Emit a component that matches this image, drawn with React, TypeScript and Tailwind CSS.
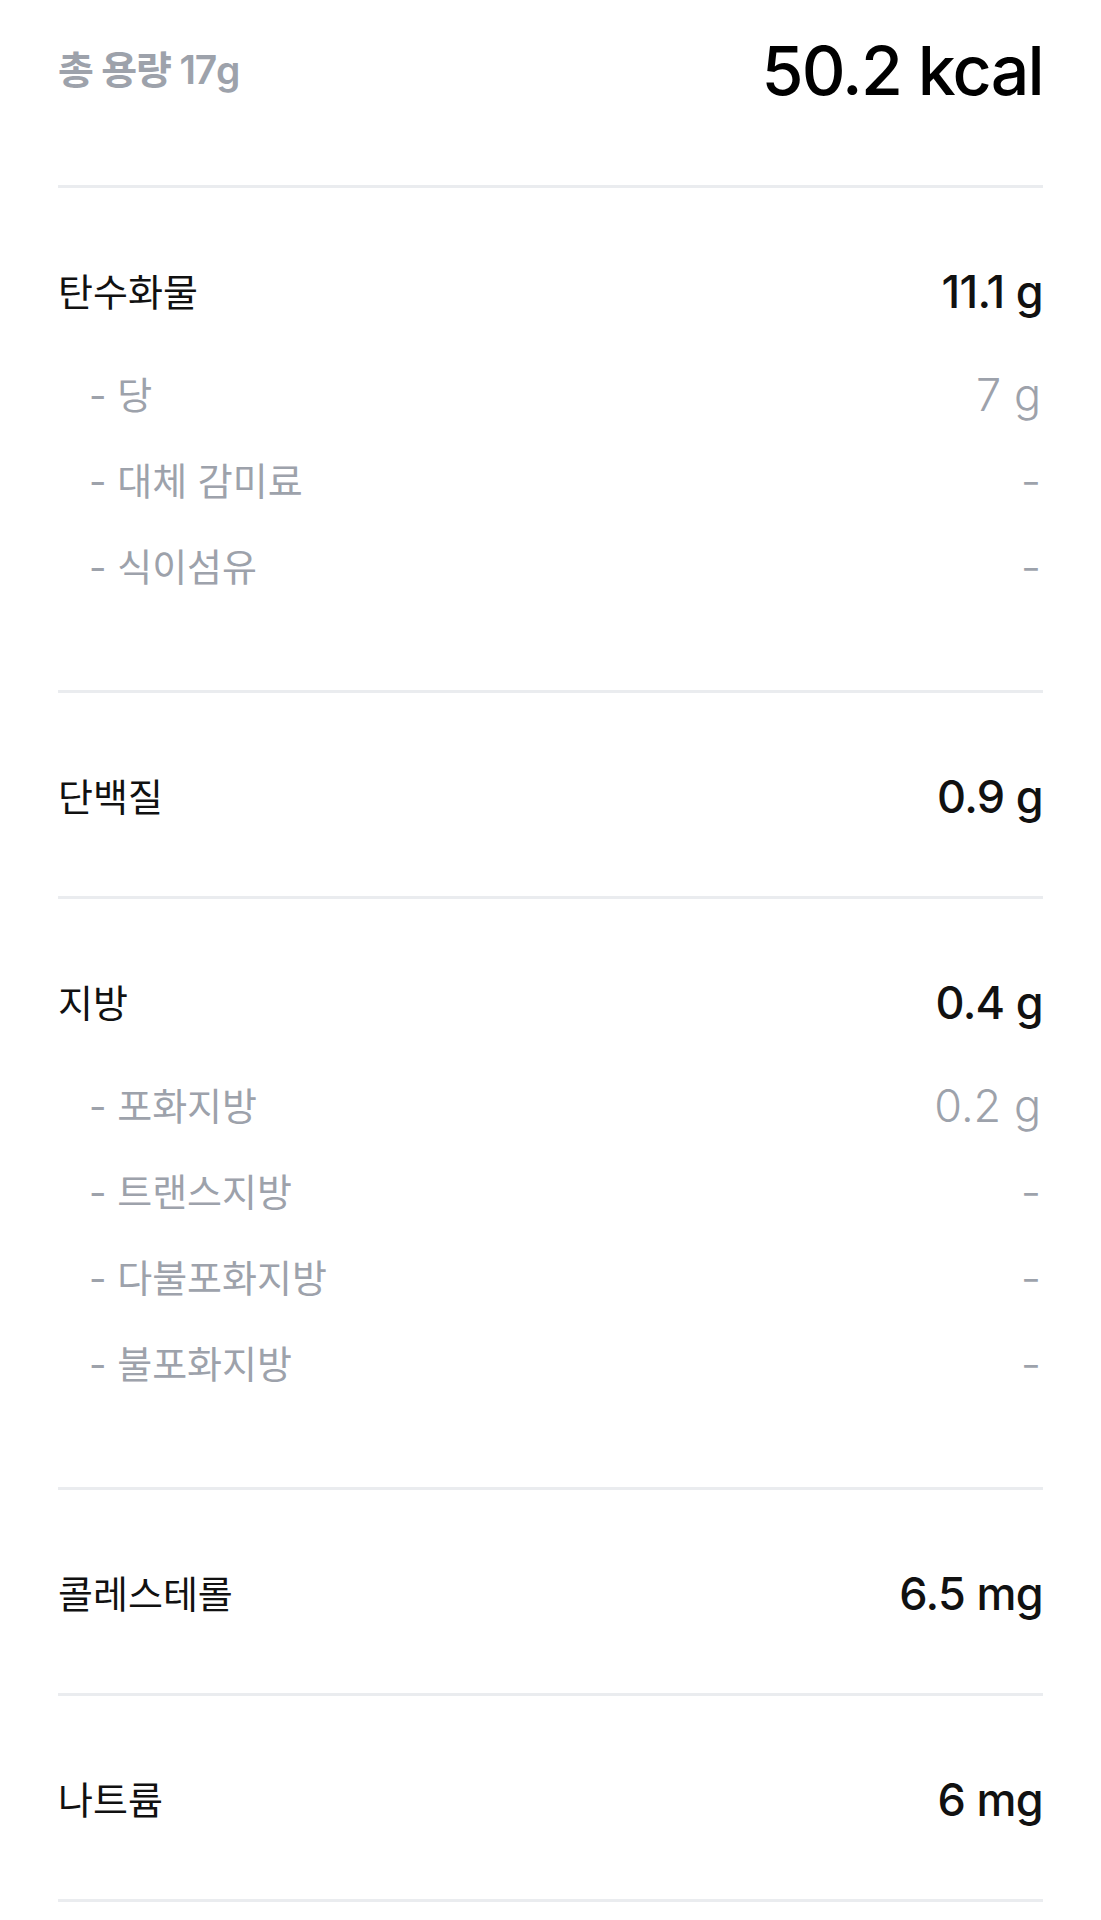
type Sub = { label: string; value: string };
type Nutrient = { label: string; value: string; subs?: Sub[] };

const NUTRIENTS: Nutrient[] = [
  {
    label: "탄수화물",
    value: "11.1 g",
    subs: [
      { label: "당", value: "7 g" },
      { label: "대체 감미료", value: "-" },
      { label: "식이섬유", value: "-" },
    ],
  },
  { label: "단백질", value: "0.9 g" },
  {
    label: "지방",
    value: "0.4 g",
    subs: [
      { label: "포화지방", value: "0.2 g" },
      { label: "트랜스지방", value: "-" },
      { label: "다불포화지방", value: "-" },
      { label: "불포화지방", value: "-" },
    ],
  },
  { label: "콜레스테롤", value: "6.5 mg" },
  { label: "나트륨", value: "6 mg" },
];

function Divider() {
  return <div className="h-[3px] bg-[#eaecef]" />;
}

function NutrientBlock({ item }: { item: Nutrient }) {
  return (
    <section className="pt-[61px] pb-[56px]">
      <div className="flex h-[86px] items-center justify-between">
        <span className="text-[38px] font-normal text-[#111111]">{item.label}</span>
        <span className="text-[45px] font-medium tracking-[-0.015em] text-[#111111]">
          {item.value}
        </span>
      </div>
      {item.subs && (
        <ul className="mt-[17px] mb-[24px]">
          {item.subs.map((s) => (
            <li key={s.label} className="flex h-[86px] items-center justify-between text-[#9da2ab]">
              <span className="pl-[31px] text-[38px] font-normal">- {s.label}</span>
              <span className="pr-[2px] text-[45px] font-light">{s.value}</span>
            </li>
          ))}
        </ul>
      )}
    </section>
  );
}

export default function App() {
  return (
    <div
      className="min-h-screen bg-white px-[58px]"
      style={{ fontFamily: '"Inter", "Noto Sans CJK KR", sans-serif' }}
    >
      {/* Total weight + energy */}
      <header className="flex h-[140px] items-center justify-between mb-[45px]">
        <span className="text-[39px] font-semibold tracking-[-0.03em] text-[#9da2ab]">총 용량 17g</span>
        <span className="text-[68px] font-medium tracking-[-0.025em] text-black">50.2 kcal</span>
      </header>
      <Divider />
      {NUTRIENTS.map((n) => (
        <div key={n.label}>
          <NutrientBlock item={n} />
          <Divider />
        </div>
      ))}
    </div>
  );
}
